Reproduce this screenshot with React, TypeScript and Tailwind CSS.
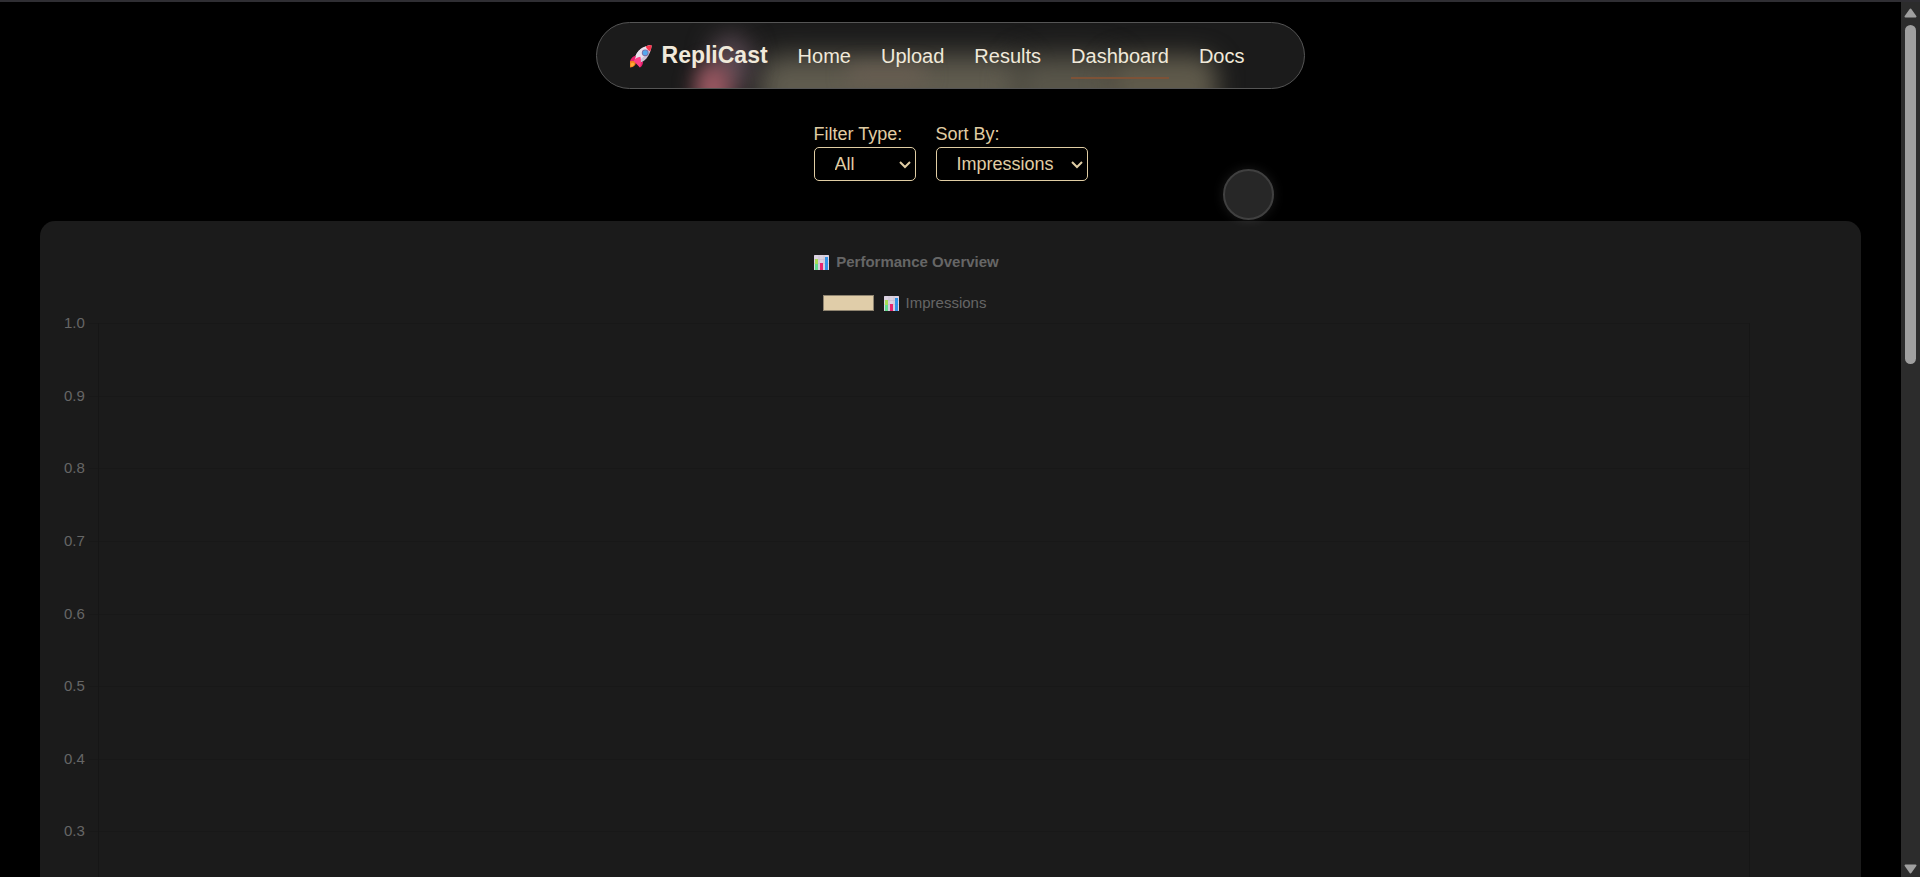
import React from "react";

const links = ["Home", "Upload", "Results", "Dashboard", "Docs"];
const ticks = ["1.0", "0.9", "0.8", "0.7", "0.6", "0.5", "0.4", "0.3"];

function Rocket() {
  return (
    <svg viewBox="0 0 24 24" className="h-6 w-6 shrink-0" aria-hidden="true">
      <path d="M1 17.200c1.500-1.500 4.600-1.200 5.600.6.900 2.600-1.600 5.600-5.600 5.700z" fill="#f5841f" />
      <path d="M1.800 19.800c.8-1.400 2.600-1.600 3.300-.3.400 1.700-1.400 3-3.300 3z" fill="#ffab35" />
      <path d="M5.400 16.500C6 9.600 11 2.600 21.500.9c1.100-.1 1.200.7 1.100 1.500C21 12 15.500 18.300 8.600 19.600z" fill="#cdc2d6" />
      <path d="M5.400 16.500C6 9.600 11 2.600 21.500.9 20 7.600 14 14.500 7.200 18.100z" fill="#e9e1ed" />
      <path d="M16.800 2.300c1.600-.7 3.100-1.200 4.900-1.400.9 0 1 .6.900 1.500-.3 1.700-.7 3.300-1.400 4.800-2.100-.6-3.900-2.600-4.400-4.900z" fill="#f8354d" />
      <circle cx="16.200" cy="8.800" r="3.400" fill="#7d6ca2" />
      <circle cx="16.200" cy="8.800" r="2.500" fill="#55a8ee" />
      <path d="M7 11.600C4 12.200 1.800 14.300 1 17.300l4.600-.6zM14 17.400c.2 2.600-1 4.800-3 6.200l-2.500-4.200z" fill="#e8216f" />
      <path d="M11.400 12.800c-3 .2-5.400 1.600-6.800 4.200l6.300 6.400c1.300-3 1.400-6.800.5-10.600z" fill="#ff4088" />
    </svg>
  );
}

function BarChartIcon() {
  return (
    <svg viewBox="0 0 15 15" className="h-[15px] w-[15px] shrink-0" aria-hidden="true">
      <rect width="15" height="15" rx=".5" fill="#dcd3e2" />
      <path d="M0 4.500h15M0 8.500h15M5 0v15M10 0v15" stroke="#c6bcd0" strokeWidth=".6" />
      <rect x="1" y="4" width="3" height="11" fill="#a5dd55" />
      <rect x="1" y="9" width="3" height="6" fill="#62d98c" />
      <rect x="6" y="8" width="3" height="7" fill="#e8256f" />
      <rect x="11" y="2" width="3" height="13" fill="#3192e6" />
    </svg>
  );
}

function NavBar() {
  return (
    <nav className="relative isolate mt-5 flex h-[67px] items-center gap-[30px] overflow-hidden rounded-full border border-[#555] bg-[#1b1b1b] pr-[60px] pl-8 text-xl text-[#f0e9da]">
      <div className="absolute inset-0 -z-10" aria-hidden="true">
        <div className="absolute top-8 left-[160px] h-16 w-[270px] rounded-[24px] bg-[#605c4f] blur-[14px]" />
        <div className="absolute top-8 left-[415px] h-16 w-[110px] rounded-[24px] bg-[#59564a] blur-[14px]" />
        <div className="absolute top-8 left-[510px] h-16 w-[110px] rounded-[20px] bg-[#5f5a4b] blur-[12px]" />
        <div className="absolute top-11 left-[250px] h-4 w-[80px] rounded-full bg-[#6b5f53] blur-[10px]" />
        <div className="absolute top-3 left-[114px] h-14 w-10 rounded-full bg-[#5a4a53] blur-[12px]" />
        <div className="absolute top-10 left-[98px] h-14 w-9 rounded-full bg-[#9a5862] blur-[10px]" />
      </div>
      <a href="#home" className="flex items-center gap-[9px] text-[23px] font-bold">
        <Rocket />
        RepliCast
      </a>
      {links.map((name) => (
        <a
          key={name}
          href={"#" + name.toLowerCase()}
          className={
            name === "Dashboard"
              ? "border-b-2 border-[#7d5237] pt-[11px] pb-[9px] leading-6"
              : "border-b-2 border-transparent pt-[11px] pb-[9px] leading-6"
          }
        >
          {name}
        </a>
      ))}
    </nav>
  );
}

function Picker({ id, label, options, width }: { id: string; label: string; options: string[]; width: string }) {
  return (
    <div className="flex flex-col text-lg text-[#e0cda4]">
      <label htmlFor={id} className="pb-0.5 leading-[22px]">
        {label}
      </label>
      <div className="relative">
        <select
          id={id}
          className={"h-[34px] appearance-none rounded-[5px] border border-[#e0cda4] bg-black pl-5 text-lg leading-6 " + width}
        >
          {options.map((o) => (
            <option key={o}>{o}</option>
          ))}
        </select>
        <svg
          viewBox="0 0 12 8"
          className="pointer-events-none absolute top-[14px] right-[5px] h-2 w-3"
          fill="none"
          stroke="currentColor"
          strokeWidth="2"
          aria-hidden="true"
        >
          <path d="M1 1l5 5 5-5" />
        </svg>
      </div>
    </div>
  );
}

function Chart() {
  return (
    <section className="mx-10 mt-10 overflow-hidden rounded-t-[15px] bg-[#1b1b1b] pt-[33px] pr-[111px] pl-[23px] text-[15px] leading-4 text-[#666]">
      <div className="flex flex-col items-center">
        <h2 className="flex items-center gap-[7px] font-bold">
          <BarChartIcon />
          Performance Overview
        </h2>
        <div className="mt-[25px] flex items-center pr-1">
          <span className="mr-[10px] h-4 w-[51px] border border-[#8f8470] bg-[#e0cda9]" />
          <span className="mr-[7px] flex">
            <BarChartIcon />
          </span>
          <span>Impressions</span>
        </div>
      </div>
      <div className="mt-[12px] flex h-[581px]">
        <ul className="flex w-[26px] flex-col">
          {ticks.map((t) => (
            <li key={t} className="-mt-2 mb-2 flex-1 pl-px">
              {t}
            </li>
          ))}
        </ul>
        <div className="flex w-[9px] flex-col">
          {ticks.map((t) => (
            <div key={t} className="flex-1 border-t border-[#181818]" />
          ))}
        </div>
        <div className="flex flex-1 flex-col border-x border-[#161616]">
          {ticks.map((t) => (
            <div key={t} className="flex-1 border-t border-[#181818]" />
          ))}
        </div>
      </div>
    </section>
  );
}

function ScrollRail() {
  return (
    <div className="flex w-[19px] shrink-0 flex-col items-center bg-[#2c2c2c]" aria-hidden="true">
      <svg viewBox="0 0 13 10" className="mt-[6px] h-[10px] w-[13px]">
        <path d="M6.500 1.500 11.500 8.500h-10z" fill="#9f9f9f" stroke="#9f9f9f" strokeWidth="2" strokeLinejoin="round" />
      </svg>
      <div className="mt-[7px] h-[339px] w-[11px] rounded-full bg-[#9f9f9f]" />
      <svg viewBox="0 0 13 10" className="mt-auto mb-[3px] h-[10px] w-[13px]">
        <path d="M6.500 8.500 1.500 1.500h10z" fill="#9f9f9f" stroke="#9f9f9f" strokeWidth="2" strokeLinejoin="round" />
      </svg>
    </div>
  );
}

export default function App() {
  return (
    <div className="flex h-screen flex-col overflow-hidden border-t-2 border-[#2f2e33] bg-black font-['Liberation_Sans',Arial,sans-serif]">
      <div className="flex min-h-0 flex-1">
        <main className="relative min-w-0 flex-1 overflow-hidden">
          <header className="flex justify-center">
            <NavBar />
          </header>
          <div className="mt-[34px] flex justify-center gap-5">
            <Picker id="filter-type" label="Filter Type:" options={["All", "Image", "Video"]} width="w-[102px]" />
            <Picker id="sort-by" label="Sort By:" options={["Impressions", "Clicks"]} width="w-[152px]" />
          </div>
          <Chart />
          <div
            className="pointer-events-none absolute top-[167px] left-[1223px] h-[51px] w-[51px] rounded-full border-2 border-[#404040] bg-[#272727] shadow-[0_0_12px_rgba(255,255,255,0.1)]"
            aria-hidden="true"
          />
        </main>
        <ScrollRail />
      </div>
    </div>
  );
}
